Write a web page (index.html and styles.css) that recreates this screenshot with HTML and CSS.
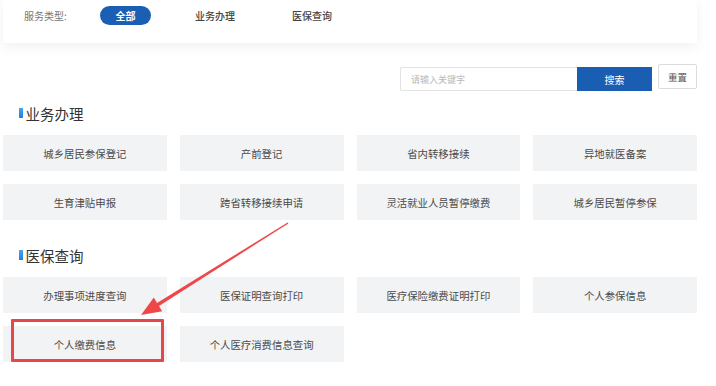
FILE: index.html
```html
<!DOCTYPE html>
<html lang="zh-CN">
<head>
    <meta charset="UTF-8">
    <title>服务事项</title>
    <link rel="stylesheet" href="styles.css">
</head>
<body>
    <div class="page">
        <!-- Filter bar -->
        <div class="filter-card">
            <span class="filter-label">服务类型:</span>
            <span class="filter-tab active">全部</span>
            <span class="filter-tab">业务办理</span>
            <span class="filter-tab">医保查询</span>
        </div>

        <!-- Search -->
        <div class="search-row">
            <div class="search-box">
                <input class="search-input" type="text" placeholder="请输入关键字">
                <button class="search-btn">搜索</button>
            </div>
            <button class="reset-btn">重置</button>
        </div>

        <!-- Sections -->
        <section class="service-section">
            <h2 class="section-title">业务办理</h2>
            <div class="service-grid">
                <div class="service-item">城乡居民参保登记</div>
                <div class="service-item">产前登记</div>
                <div class="service-item">省内转移接续</div>
                <div class="service-item">异地就医备案</div>
                <div class="service-item">生育津贴申报</div>
                <div class="service-item">跨省转移接续申请</div>
                <div class="service-item">灵活就业人员暂停缴费</div>
                <div class="service-item">城乡居民暂停参保</div>
            </div>
        </section>

        <section class="service-section second">
            <h2 class="section-title">医保查询</h2>
            <div class="service-grid">
                <div class="service-item">办理事项进度查询</div>
                <div class="service-item">医保证明查询打印</div>
                <div class="service-item">医疗保险缴费证明打印</div>
                <div class="service-item">个人参保信息</div>
                <div class="service-item">个人缴费信息</div>
                <div class="service-item">个人医疗消费信息查询</div>
            </div>
        </section>

        <!-- Annotation -->
        <div class="mark-box"></div>
        <svg class="mark-arrow" width="716" height="386" viewBox="0 0 716 386">
            <polygon fill="#ef4747" points="288.4,223.4 287.6,222.6 157,302.9 153.8,297.6 141,315 162.2,311.2 159,305.9"/>
        </svg>
    </div>
</body>
</html>
```

FILE: styles.css
```css
/* === Base === */
* {
    margin: 0;
    padding: 0;
    box-sizing: border-box;
    font-family: "Noto Sans CJK SC", "Noto Sans", sans-serif;
}

body {
    background: #ffffff;
    color: #333;
}

.page {
    position: relative;
    width: 716px;
    height: 386px;
    padding: 0 19px 0 3px;
    overflow: hidden;
}

/* Filter card */
.filter-card {
    height: 43px;
    background: #fff;
    box-shadow: 0 4px 12px rgba(0, 0, 0, 0.06);
    display: flex;
    align-items: flex-start;
    padding: 6px 0 0 21px;
}

.filter-label {
    font-size: 10px;
    line-height: 19px;
    color: #777;
    width: 76px;
}

.filter-tab {
    font-size: 10px;
    line-height: 19px;
    color: #444;
    font-weight: 500;
    margin-right: 57px;
}

.filter-tab.active {
    width: 51px;
    text-align: center;
    border-radius: 10px;
    background: #1b5fb5;
    color: #fff;
    font-weight: 700;
    margin-right: 44px;
}

/* Search */
.search-row {
    display: flex;
    justify-content: flex-end;
    align-items: flex-start;
    gap: 6px;
    margin-top: 21px;
}

.search-box {
    display: flex;
    margin-top: 3px;
}

.search-input {
    width: 177px;
    height: 24px;
    border: 1px solid #e3e3e3;
    border-right: none;
    border-radius: 2px 0 0 2px;
    padding-left: 10px;
    font-size: 9px;
    color: #333;
    outline: none;
}

.search-input::placeholder {
    color: #b8b8b8;
}

.search-btn {
    width: 75px;
    height: 24px;
    border: none;
    background: #1a5eb3;
    color: #fff;
    font-size: 10px;
}

.reset-btn {
    width: 39px;
    height: 25px;
    border: 1px solid #dcdcdc;
    border-radius: 2px;
    background: #fff;
    color: #555;
    font-size: 9.5px;
}

/* Sections */
.service-section {
    margin-top: 12px;
}

.service-section.second {
    margin-top: 25px;
}

.section-title {
    display: flex;
    align-items: center;
    gap: 3px;
    height: 20px;
    padding-left: 16px;
    margin-bottom: 12px;
    font-size: 14.5px;
    font-weight: 400;
    color: #333;
}

.section-title::before {
    content: '';
    width: 3.5px;
    height: 10px;
    background: linear-gradient(#4aa3f0, #1f7fe0);
}

.service-grid {
    display: grid;
    grid-template-columns: repeat(4, 1fr);
    gap: 13px;
}

.service-item {
    height: 36px;
    background: #f2f3f5;
    display: flex;
    align-items: center;
    justify-content: center;
    font-size: 10.4px;
    color: #4a4a4a;
}

/* Annotation overlay */
.mark-box {
    position: absolute;
    left: 11px;
    top: 319px;
    width: 153px;
    height: 43px;
    border: 3px solid #e8474a;
    border-radius: 1px;
}

.mark-arrow {
    position: absolute;
    left: 0;
    top: 0;
    pointer-events: none;
}
```
